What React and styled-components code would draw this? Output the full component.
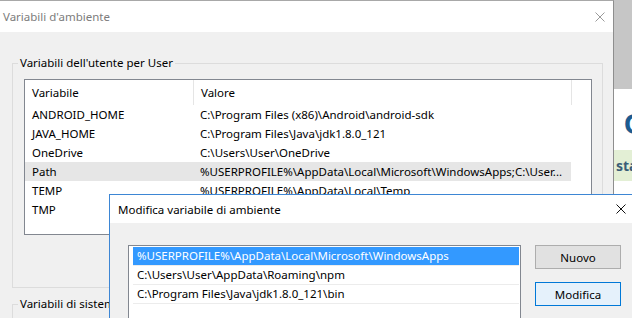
import React from 'react'
import styled, { createGlobalStyle } from 'styled-components'

const GlobalStyle = createGlobalStyle`
  html, body {
    margin: 0;
    padding: 0;
    background: #fff;
  }
  body {
    font-family: "Noto Sans", "Open Sans", sans-serif;
    font-size: 11.5px;
    color: #000;
  }
`

const userVars = [
  { name: 'ANDROID_HOME', value: 'C:\\Program Files (x86)\\Android\\android-sdk' },
  { name: 'JAVA_HOME', value: 'C:\\Program Files\\Java\\jdk1.8.0_121' },
  { name: 'OneDrive', value: 'C:\\Users\\User\\OneDrive' },
  { name: 'Path', value: '%USERPROFILE%\\AppData\\Local\\Microsoft\\WindowsApps;C:\\User...', selected: true },
  { name: 'TEMP', value: '%USERPROFILE%\\AppData\\Local\\Temp' },
  { name: 'TMP', value: '%USERPROFILE%\\AppData\\Local\\Temp' },
]

const pathEntries = [
  { text: '%USERPROFILE%\\AppData\\Local\\Microsoft\\WindowsApps', selected: true },
  { text: 'C:\\Users\\User\\AppData\\Roaming\\npm' },
  { text: 'C:\\Program Files\\Java\\jdk1.8.0_121\\bin' },
  { text: '' },
]

const CloseIcon = ({ color }) => (
  <svg width="10" height="10" viewBox="0 0 10 10">
    <path d="M0.5 0.5 L9.5 9.5 M9.5 0.5 L0.5 9.5" stroke={color} strokeWidth="1" fill="none" />
  </svg>
)

export default function App() {
  return (
    <>
      <GlobalStyle />
      <Desktop>
        <BackPage>
          <PageHeader />
          <PageBody>
            <Logo>C</Logo>
            <Banner>sta</Banner>
          </PageBody>
        </BackPage>

        <MainWindow>
          <TitleBar>
            <Title $inactive>Variabili d'ambiente</Title>
            <CloseBox $right={8}>
              <CloseIcon color="#9a9a9a" />
            </CloseBox>
          </TitleBar>
          <WindowBody>
            <GroupBox>
              <GroupLabel>Variabili dell'utente per User</GroupLabel>
              <ListView>
                <HeaderRow>
                  <HeaderCell>Variabile</HeaderCell>
                  <HeaderCell $divider>Valore</HeaderCell>
                  <HeaderCell $divider />
                </HeaderRow>
                {userVars.map((v) => (
                  <VarRow key={v.name} $selected={v.selected}>
                    <Cell>{v.name}</Cell>
                    <Cell>{v.value}</Cell>
                  </VarRow>
                ))}
              </ListView>
            </GroupBox>
            <GroupBox $open>
              <GroupLabel>Variabili di sistema</GroupLabel>
            </GroupBox>
          </WindowBody>
        </MainWindow>

        <EditWindow>
          <TitleBar $height={28}>
            <Title $pad={8}>Modifica variabile di ambiente</Title>
            <CloseBox $right={18}>
              <CloseIcon color="#111" />
            </CloseBox>
          </TitleBar>
          <EditBody>
            <EntryList>
              {pathEntries.map((e, i) => (
                <Entry key={i} $selected={e.selected}>{e.text}</Entry>
              ))}
            </EntryList>
            <ButtonColumn>
              <Button>Nuovo</Button>
              <Button $focused>Modifica</Button>
            </ButtonColumn>
          </EditBody>
        </EditWindow>
      </Desktop>
    </>
  )
}

const Desktop = styled.div`
  position: relative;
  width: 632px;
  height: 318px;
  overflow: hidden;
  background: #fff;
`

const BackPage = styled.div`
  display: flex;
  flex-direction: column;
  width: 100%;
  height: 100%;
`

const PageHeader = styled.div`
  height: 89px;
  background: #c6c6c6;
`

const PageBody = styled.div`
  display: flex;
  flex-direction: column;
  padding-top: 18px;
`

const Logo = styled.div`
  padding-left: 624px;
  font-family: "Liberation Sans", sans-serif;
  font-size: 30px;
  font-weight: 700;
  line-height: 34px;
  color: #1d5b8f;
`

const Banner = styled.div`
  margin-top: 9px;
  height: 31px;
  padding-left: 616px;
  background: #e3efd5;
  font-size: 14px;
  font-weight: 700;
  line-height: 31px;
  color: #3a5d77;
`

const MainWindow = styled.div`
  position: absolute;
  left: 0;
  top: 0;
  width: 614px;
  height: 318px;
  display: flex;
  flex-direction: column;
  box-sizing: border-box;
  border-top: 1px solid #a8a8a8;
  border-right: 1px solid #8e8e8e;
  background: #f0f0f0;
`

const TitleBar = styled.div`
  height: ${(p) => p.$height || 31}px;
  flex: none;
  display: flex;
  align-items: center;
  background: #fff;
`

const Title = styled.div`
  flex: 1;
  padding-left: ${(p) => p.$pad || 3}px;
  color: ${(p) => (p.$inactive ? '#7c7c7c' : '#000')};
  white-space: nowrap;
`

const CloseBox = styled.div`
  display: flex;
  margin-right: ${(p) => p.$right}px;
`

const WindowBody = styled.div`
  flex: 1;
  display: flex;
  flex-direction: column;
  padding: 31px 10px 0 12px;
`

const GroupBox = styled.div`
  position: relative;
  border: 1px solid #dcdcdc;
  padding: 15px 10px 52px 11px;
  ${(p) =>
    p.$open &&
    `
    margin-top: 16px;
    flex: 1;
    border-bottom: none;
    padding: 0;
  `}
`

const GroupLabel = styled.div`
  position: absolute;
  top: -9px;
  left: 5px;
  padding: 0 2px;
  line-height: 16px;
  background: #f0f0f0;
  white-space: nowrap;
`

const ListView = styled.div`
  height: 156px;
  box-sizing: border-box;
  border: 1px solid #828790;
  background: #fff;
`

const HeaderRow = styled.div`
  display: grid;
  grid-template-columns: 168px 378px 1fr;
  height: 25px;
`

const HeaderCell = styled.div`
  display: flex;
  align-items: center;
  padding-left: 7px;
  border-left: ${(p) => (p.$divider ? '1px solid #e5e5e5' : 'none')};
  white-space: nowrap;
`

const VarRow = styled.div`
  display: grid;
  grid-template-columns: 168px 378px;
  width: 546px;
  height: 19px;
  align-items: center;
  background: ${(p) => (p.$selected ? '#e6e6e6' : 'transparent')};
`

const Cell = styled.div`
  padding-left: 7px;
  white-space: nowrap;
  overflow: hidden;
`

const EditWindow = styled.div`
  position: absolute;
  left: 109px;
  top: 194px;
  width: 536px;
  height: 140px;
  display: flex;
  flex-direction: column;
  box-sizing: border-box;
  border: 1px solid #3d86d4;
  background: #f0f0f0;
`

const EditBody = styled.div`
  display: flex;
  gap: 14px;
  padding: 22px 0 0 18px;
`

const EntryList = styled.div`
  width: 393px;
  height: 120px;
  box-sizing: border-box;
  border: 1px solid #828790;
  background: #fff;
  padding: 1px 1px 0 4px;
`

const Entry = styled.div`
  height: 18px;
  line-height: 18px;
  padding-left: 4px;
  border-bottom: 1px solid #ececec;
  white-space: nowrap;
  background: ${(p) => (p.$selected ? '#3399ff' : 'transparent')};
  color: ${(p) => (p.$selected ? '#fff' : '#000')};
`

const ButtonColumn = styled.div`
  display: flex;
  flex-direction: column;
  gap: 13px;
`

const Button = styled.div`
  width: 86px;
  height: 24px;
  box-sizing: border-box;
  display: flex;
  align-items: center;
  justify-content: center;
  border: 1px solid ${(p) => (p.$focused ? '#0078d7' : '#adadad')};
  background: ${(p) => (p.$focused ? '#e5f1fb' : '#e1e1e1')};
`
